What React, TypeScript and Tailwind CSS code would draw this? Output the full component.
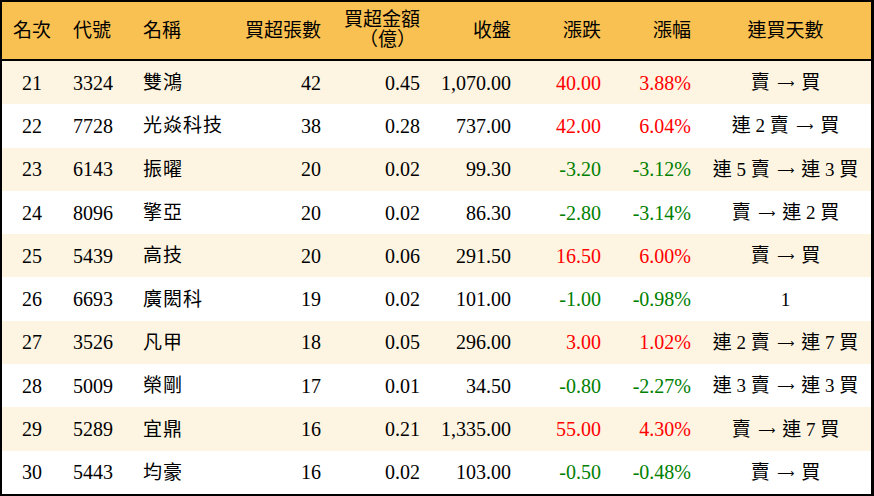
const rows = [
  { rank: 21, code: "3324", name: "雙鴻", lots: "42", amount: "0.45", close: "1,070.00", chg: "40.00", pct: "3.88%", up: true, days: "賣 → 買" },
  { rank: 22, code: "7728", name: "光焱科技", lots: "38", amount: "0.28", close: "737.00", chg: "42.00", pct: "6.04%", up: true, days: "連 2 賣 → 買" },
  { rank: 23, code: "6143", name: "振曜", lots: "20", amount: "0.02", close: "99.30", chg: "-3.20", pct: "-3.12%", up: false, days: "連 5 賣 → 連 3 買" },
  { rank: 24, code: "8096", name: "擎亞", lots: "20", amount: "0.02", close: "86.30", chg: "-2.80", pct: "-3.14%", up: false, days: "賣 → 連 2 買" },
  { rank: 25, code: "5439", name: "高技", lots: "20", amount: "0.06", close: "291.50", chg: "16.50", pct: "6.00%", up: true, days: "賣 → 買" },
  { rank: 26, code: "6693", name: "廣閎科", lots: "19", amount: "0.02", close: "101.00", chg: "-1.00", pct: "-0.98%", up: false, days: "1" },
  { rank: 27, code: "3526", name: "凡甲", lots: "18", amount: "0.05", close: "296.00", chg: "3.00", pct: "1.02%", up: true, days: "連 2 賣 → 連 7 買" },
  { rank: 28, code: "5009", name: "榮剛", lots: "17", amount: "0.01", close: "34.50", chg: "-0.80", pct: "-2.27%", up: false, days: "連 3 賣 → 連 3 買" },
  { rank: 29, code: "5289", name: "宜鼎", lots: "16", amount: "0.21", close: "1,335.00", chg: "55.00", pct: "4.30%", up: true, days: "賣 → 連 7 買" },
  { rank: 30, code: "5443", name: "均豪", lots: "16", amount: "0.02", close: "103.00", chg: "-0.50", pct: "-0.48%", up: false, days: "賣 → 買" },
]

const cols = "grid grid-cols-[60px_73px_105px_90px_98px_92px_90px_90px_1fr] items-center"

// split on the arrow so it can use a longer, thinner glyph
function Days({ text }: { text: string }) {
  const parts = text.split("→")
  if (parts.length === 1) return <>{text}</>
  return (
    <>
      {parts[0]}
      <span
        style={{ fontFamily: '"DejaVu Sans", sans-serif' }}
        className="inline-block w-[22px] text-center text-[12px] align-[2px]"
      >
        ⟶
      </span>
      {parts[1]}
    </>
  )
}

export default function App() {
  return (
    <div
      className="w-[874px] h-[496px] flex flex-col border-l-2 border-t-2 border-r-[3px] border-b-2 border-black bg-white text-black"
      style={{ fontFamily: '"Liberation Serif", "Noto Sans CJK TC", serif' }}
    >
      {/* header */}
      <div className={`${cols} h-[59px] shrink-0 bg-[#f9c152] border-b-2 border-black text-[19px] leading-[20px]`}>
        <div className="text-center">名次</div>
        <div className="pl-[11px]">代號</div>
        <div className="pl-[8px]">名稱</div>
        <div className="text-right pr-[9px]">買超張數</div>
        <div className="text-right pr-[8px] -mt-[2px]">
          <div>買超金額</div>
          <div className="pr-[4px]">（億）</div>
        </div>
        <div className="text-right pr-[9px]">收盤</div>
        <div className="text-right pr-[9px]">漲跌</div>
        <div className="text-right pr-[9px]">漲幅</div>
        <div className="text-center">連買天數</div>
      </div>

      {rows.map((r, i) => {
        const color = r.up ? "text-[#ff0000]" : "text-[#008000]"
        return (
          <div
            key={r.rank}
            className={`${cols} flex-1 text-[20px] leading-none ${i % 2 === 0 ? "bg-[#fdf5e2]" : "bg-white"}`}
          >
            <div className="text-center">{r.rank}</div>
            <div className="pl-[11px]">{r.code}</div>
            <div className="pl-[8px] text-[19px] tracking-[1px]">{r.name}</div>
            <div className="text-right pr-[9px]">{r.lots}</div>
            <div className="text-right pr-[8px]">{r.amount}</div>
            <div className="text-right pr-[9px]">{r.close}</div>
            <div className={`text-right pr-[9px] ${color}`}>{r.chg}</div>
            <div className={`text-right pr-[9px] ${color}`}>{r.pct}</div>
            <div className="text-center text-[19px] whitespace-pre">
              <Days text={r.days} />
            </div>
          </div>
        )
      })}
    </div>
  )
}
